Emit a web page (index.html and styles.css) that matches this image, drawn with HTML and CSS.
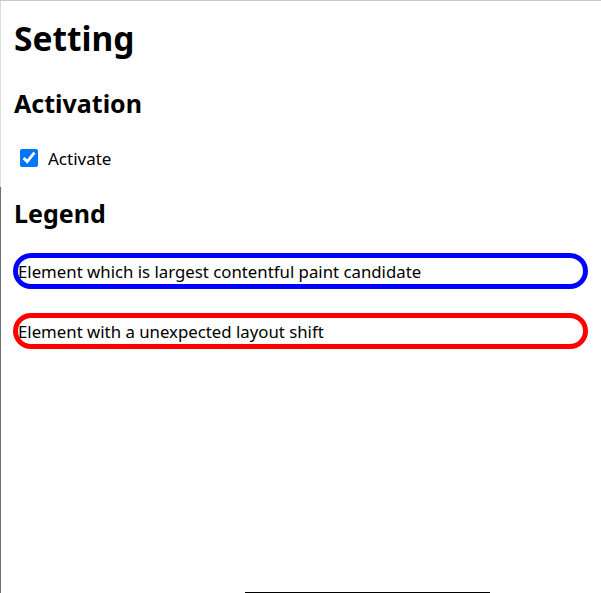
FILE: index.html
```html
<!DOCTYPE html>
<html lang="en">
<head>
<meta charset="utf-8">
<title>Setting</title>
<link rel="stylesheet" href="styles.css">
</head>
<body>
<main class="page">
  <h1 class="title">Setting</h1>
  <h2 class="section">Activation</h2>
  <label class="check-row">
    <input type="checkbox" class="check" checked>
    <span class="check-label">Activate</span>
  </label>
  <h2 class="section legend-title">Legend</h2>
  <div class="legend-list">
    <div class="pill pill-lcp">Element which is largest contentful paint candidate</div>
    <div class="pill pill-shift">Element with a unexpected layout shift</div>
  </div>
</main>
<div class="bottom-line"></div>
</body>
</html>
```
FILE: styles.css
```css
html {
  margin: 0;
  height: 100%;
  background:
    linear-gradient(to bottom, #dcdcdc 0, #dcdcdc 186px, #6e6e6e 186px, #6e6e6e 100%) left top / 1px 100% no-repeat,
    #ffffff;
  border-top: 1px solid #c8c8c8;
  box-sizing: border-box;
}
body {
  margin: 0;
  height: 100%;
  font-family: "Noto Sans", "Open Sans", sans-serif;
  color: #000;
  position: relative;
}
.page {
  padding: 0 13px 0 13px;
}
.title {
  margin: 15px 0 0 1px;
  font-size: 33.5px;
  line-height: 44px;
  font-weight: 700;
}
.section {
  margin: 0 0 0 1px;
  font-size: 25px;
  line-height: 34px;
  font-weight: 700;
}
.title + .section {
  margin-top: 26px;
}
.check-row {
  display: flex;
  align-items: center;
  gap: 10px;
  margin: 27px 0 0 7px;
  height: 22px;
  font-size: 17px;
}
.check {
  width: 18px;
  height: 18px;
  margin: 0;
  accent-color: #0075ff;
}
.legend-title {
  margin-top: 27px;
}
.legend-list {
  display: flex;
  flex-direction: column;
  gap: 24px;
  margin-top: 23px;
}
.pill {
  border: 5px solid;
  border-radius: 20px;
  height: 26px;
  line-height: 27px;
  font-size: 16.8px;
  padding: 0;
  white-space: nowrap;
}
.pill-lcp { border-color: #0000ff; }
.pill-shift { border-color: #ff0000; }
.bottom-line {
  position: absolute;
  left: 245px;
  bottom: 0;
  width: 245px;
  height: 1px;
  background: #000;
}
```
